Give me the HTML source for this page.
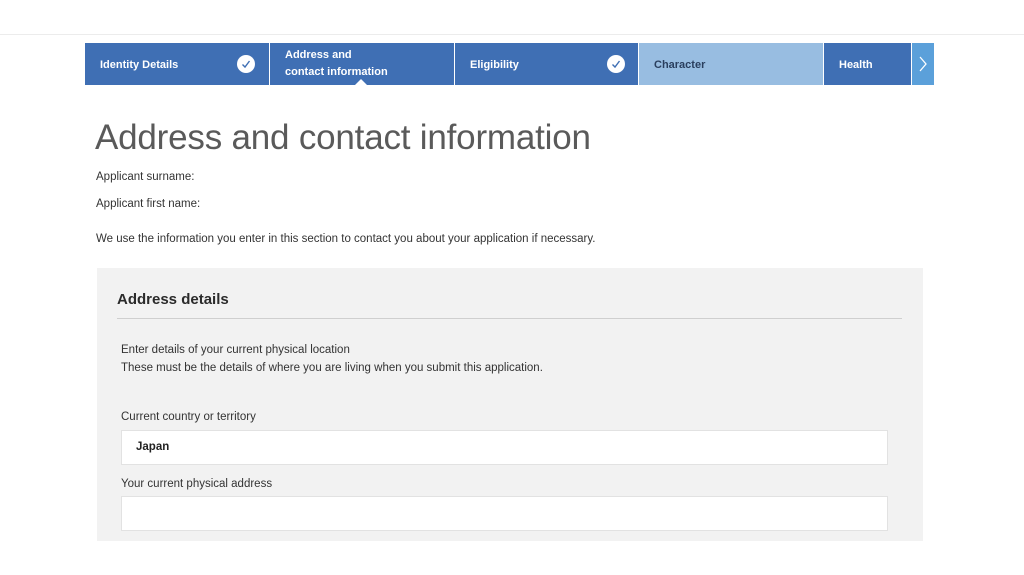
<!DOCTYPE html>
<html><head><meta charset="utf-8"><style>
*{margin:0;padding:0;box-sizing:border-box}
body{width:1024px;height:575px;background:#fff;font-family:"Liberation Sans",sans-serif;position:relative;overflow:hidden;color:#333}
.a{position:absolute}
.seg{position:absolute;top:43px;height:42px;background:#3f6fb4;color:#fff;font-weight:bold;font-size:11px;padding-left:15px;display:flex;align-items:center;line-height:17px}
.chk{position:absolute;top:12px;width:18px;height:18px;border-radius:50%;background:#fff}
.t{font-size:11.5px;color:#333}
</style></head><body>
<div class="a" style="left:0;top:34px;width:1024px;height:1px;background:#ececec"></div>
<div class="seg" style="left:85px;width:184px;padding-top:2px">Identity Details<div class="chk" style="left:152px"><svg width="18" height="18"><path d="M5.5 9.5l2.5 2.5 4.5-6" stroke="#3f6fb4" stroke-width="1.4" fill="none"/></svg></div></div>
<div class="seg" style="left:270px;width:184px">Address and<br>contact information<div class="a" style="left:85px;top:36px;width:0;height:0;border-left:6px solid transparent;border-right:6px solid transparent;border-bottom:6px solid #fff"></div></div>
<div class="seg" style="left:455px;width:183px;padding-top:2px">Eligibility<div class="chk" style="left:152px"><svg width="18" height="18"><path d="M5.5 9.5l2.5 2.5 4.5-6" stroke="#3f6fb4" stroke-width="1.4" fill="none"/></svg></div></div>
<div class="seg" style="left:639px;width:184px;background:#98bde1;color:#2a3f5e;padding-top:2px">Character</div>
<div class="seg" style="left:824px;width:87px;padding-top:2px">Health</div>
<div class="seg" style="left:912px;width:22px;background:#5ba0da;padding-left:6px"><svg width="10" height="18"><path d="M2 2l6 7-6 7" stroke="#fff" stroke-width="1.3" fill="none"/></svg></div>
<div class="a" style="left:95px;top:118px;font-size:35px;color:#5a5a5a;font-weight:300;letter-spacing:-0.2px">Address and contact information</div>
<div class="a t" style="left:96px;top:171px">Applicant surname:</div>
<div class="a t" style="left:96px;top:198px">Applicant first name:</div>
<div class="a t" style="left:96px;top:233px">We use the information you enter in this section to contact you about your application if necessary.</div>
<div class="a" style="left:97px;top:268px;width:826px;height:273px;background:#f2f2f2">
<div class="a" style="left:20px;top:23px;font-size:15px;font-weight:bold;color:#2b2b2b">Address details</div>
<div class="a" style="left:20px;top:50px;width:785px;height:1px;background:#cfcfcf"></div>
<div class="a t" style="left:24px;top:76px">Enter details of your current physical location</div>
<div class="a t" style="left:24px;top:94px">These must be the details of where you are living when you submit this application.</div>
<div class="a t" style="left:24px;top:143px">Current country or territory</div>
<div class="a" style="left:24px;top:162px;width:767px;height:35px;background:#fff;border:1px solid #e2e2e2;font-size:11.5px;font-weight:bold;padding:10px 14px;color:#222">Japan</div>
<div class="a t" style="left:24px;top:210px">Your current physical address</div>
<div class="a" style="left:24px;top:228px;width:767px;height:35px;background:#fff;border:1px solid #e2e2e2"></div>
</div>
</body></html>
